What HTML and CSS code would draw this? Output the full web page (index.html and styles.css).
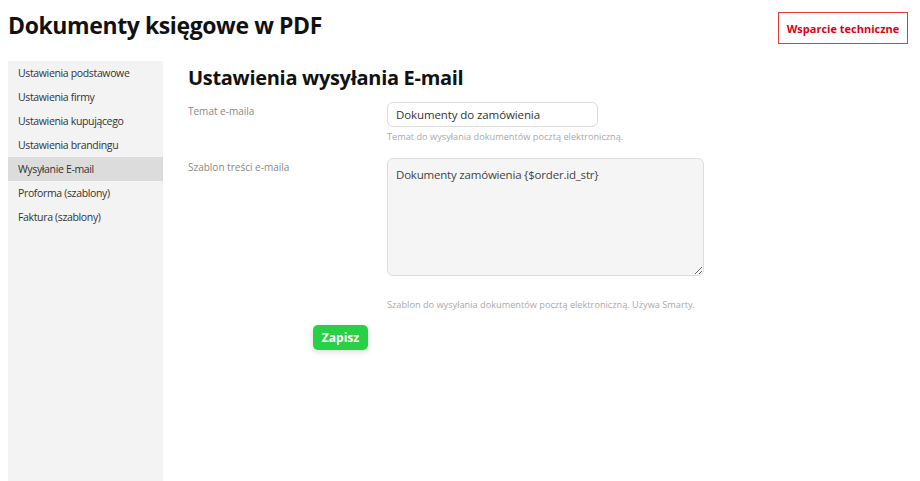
FILE: index.html
```html
<!DOCTYPE html>
<html lang="pl">
<head>
<meta charset="utf-8">
<title>Dokumenty księgowe w PDF</title>
<link rel="stylesheet" href="styles.css">
</head>
<body>
<div class="page">
  <header class="topbar">
    <h1 class="title">Dokumenty księgowe w PDF</h1>
    <a class="support" href="#">Wsparcie techniczne</a>
  </header>
  <div class="layout">
    <nav class="sidebar">
      <a class="nav-item" href="#">Ustawienia podstawowe</a>
      <a class="nav-item" href="#">Ustawienia firmy</a>
      <a class="nav-item" href="#">Ustawienia kupującego</a>
      <a class="nav-item" href="#">Ustawienia brandingu</a>
      <a class="nav-item active" href="#">Wysyłanie E-mail</a>
      <a class="nav-item" href="#">Proforma (szablony)</a>
      <a class="nav-item" href="#">Faktura (szablony)</a>
    </nav>
    <main class="content">
      <h2 class="heading">Ustawienia wysyłania E-mail</h2>
      <form class="form">
        <div class="row">
          <label class="label" for="subject">Temat e-maila</label>
          <div class="field">
            <input id="subject" class="input" type="text" value="Dokumenty do zamówienia">
            <p class="help">Temat do wysyłania dokumentów pocztą elektroniczną.</p>
          </div>
        </div>
        <div class="row">
          <label class="label" for="body">Szablon treści e-maila</label>
          <div class="field">
            <textarea id="body" class="textarea">Dokumenty zamówienia {$order.id_str}</textarea>
            <p class="help help-spaced">Szablon do wysyłania dokumentów pocztą elektroniczną. Używa Smarty.</p>
          </div>
        </div>
        <div class="actions">
          <button class="save" type="button">Zapisz</button>
        </div>
      </form>
    </main>
  </div>
</div>
</body>
</html>
```
FILE: styles.css
```css
* { box-sizing: border-box; }
html, body { margin: 0; padding: 0; background: #fff; }
body {
  font-family: "Open Sans", "Noto Sans", "Liberation Sans", sans-serif;
  color: #222;
}
.page { padding: 0 12px 0 8px; }
.topbar {
  display: flex;
  justify-content: space-between;
  align-items: flex-start;
  height: 61px;
}
.title {
  margin: 9px 0 0 0;
  font-size: 23px;
  line-height: 32px;
  font-weight: 700;
  letter-spacing: -0.4px;
  color: #111;
}
.support {
  margin-top: 12px;
  width: 130px;
  height: 32px;
  display: flex;
  align-items: center;
  justify-content: center;
  border: 1px solid #e23b3b;
  color: #e00012;
  font-size: 11px;
  font-weight: 700;
  text-decoration: none;
}
.layout {
  display: flex;
  align-items: stretch;
}
.sidebar {
  width: 155px;
  min-height: 420px;
  background: #f3f3f3;
  display: flex;
  flex-direction: column;
}
.nav-item {
  display: block;
  height: 24px;
  line-height: 24px;
  padding-left: 10px;
  font-size: 10.5px;
  letter-spacing: -0.35px;
  color: #333;
  text-decoration: none;
}
.nav-item.active { background: #dcdcdc; }
.content {
  flex: 1;
  padding-left: 25px;
}
.heading {
  margin: 3px 0 11px 0;
  font-size: 20px;
  line-height: 27px;
  font-weight: 700;
  letter-spacing: -0.3px;
  color: #111;
}
.form { display: flex; flex-direction: column; }
.row {
  display: grid;
  grid-template-columns: 199px 1fr;
  margin-bottom: 15px;
}
.label {
  padding-top: 2px;
  font-size: 10px;
  line-height: 14px;
  color: #888;
}
.field { display: flex; flex-direction: column; align-items: flex-start; }
.input {
  width: 211px;
  height: 25px;
  border: 1px solid #dddddd;
  border-radius: 6px;
  padding: 0 8px;
  font-family: inherit;
  font-size: 11.5px;
  letter-spacing: -0.1px;
  color: #333;
  background: #fff;
  outline: none;
}
.textarea {
  width: 317px;
  height: 118px;
  border: 1px solid #dddddd;
  border-radius: 6px;
  padding: 8px;
  font-family: inherit;
  font-size: 11.5px;
  letter-spacing: -0.2px;
  line-height: 16px;
  color: #444;
  background: #f5f5f5;
  outline: none;
  margin: 0;
  resize: vertical;
}
.help {
  margin: 4px 0 0 0;
  font-size: 9.2px;
  line-height: 12px;
  color: #aaa;
}
.help-spaced { margin-top: 23px; }
.actions {
  margin-top: -1px;
  padding-left: 125px;
}
.save {
  width: 55px;
  height: 25px;
  border: none;
  border-radius: 5px;
  background: #27d045;
  color: #fff;
  font-family: inherit;
  font-size: 12px;
  font-weight: 700;
  box-shadow: 0 2px 6px rgba(0,0,0,0.15);
  cursor: pointer;
  padding: 0;
}
```
